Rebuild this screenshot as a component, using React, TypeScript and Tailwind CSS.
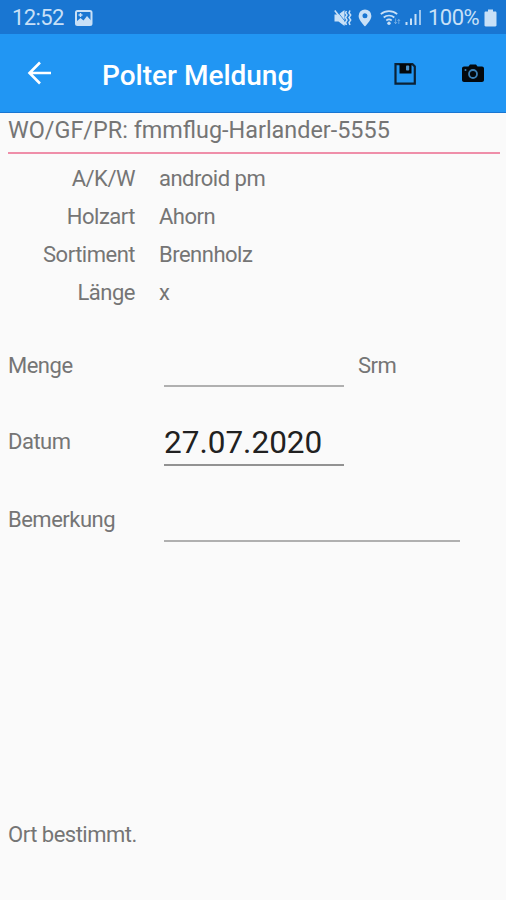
const DETAILS = [
  { label: 'A/K/W', value: 'android pm' },
  { label: 'Holzart', value: 'Ahorn' },
  { label: 'Sortiment', value: 'Brennholz' },
  { label: 'Länge', value: 'x' },
]

function StatusBar() {
  return (
    <div className="h-[34px] bg-[#1976d2] flex items-center text-[#c8e0f7]">
      <span className="ml-[12px] mt-[2px] w-[63px] text-[22px] leading-none tracking-[-0.6px] whitespace-nowrap">12:52</span>
      <svg className="mt-[2px]" width="18" height="16" viewBox="0 0 18 16" fill="none">
        <rect x="1" y="1" width="15.5" height="14" rx="1.5" stroke="currentColor" strokeWidth="2" />
        <path d="M1 12l4.5-4 3 2.5L12 6l4.5 5v4H1z" fill="currentColor" />
        <path d="M5.5 3v4M3.5 5h4" stroke="currentColor" strokeWidth="1.4" />
      </svg>
      <div className="ml-auto mr-[9px] mt-px flex items-center">
        {/* Muted, vibrate */}
        <svg width="18" height="18" viewBox="0 0 18 18" fill="none">
          <path d="M0.5 5.5h4L10.500 1v16L4.500 12.500h-4z" fill="currentColor" />
          <path d="M2.2 1.2l9.800 12.300" stroke="#1976d2" strokeWidth="0.8" />
          <path d="M0.8 1.5l10.700 14" stroke="currentColor" strokeWidth="1.6" />
          <path d="M12.500 2l-1 2 1.500 2-1.500 2.500 1.500 2.500-1.500 2.500 1 2.500M16 1.500l-1 2.300 1.700 2.300L15 8.500l1.700 2.500-1.700 2.500 1 2.500" stroke="currentColor" strokeWidth="1.5" />
        </svg>
        <svg className="ml-[6.5px]" width="14" height="18" viewBox="0 0 14 18">
          <path d="M7 0.5a6.4 6.4 0 0 0-6.4 6.4C.6 11.3 7 17.3 7 17.3s6.4-6 6.4-10.4A6.4 6.4 0 0 0 7 .5zM7 9.3a2.5 2.5 0 1 1 0-5 2.5 2.5 0 0 1 0 5z" fill="currentColor" />
        </svg>
        <svg className="ml-[8px]" width="21" height="17" viewBox="0 0 21 17" fill="none" stroke="currentColor" strokeWidth="1.7">
          <path d="M0.8 5.2a12.5 12.5 0 0 1 16.4 0M3.7 8.5a8 8 0 0 1 10.6 0M6.3 11.5a4.4 4.4 0 0 1 5.4 0" />
          <circle cx="9" cy="14.3" r="1.7" fill="currentColor" stroke="none" />
          <path d="M15.6 9.5v5M14.2 13l1.4 1.7 1.4-1.7M18.8 15v-4.5M17.5 12l1.3-1.6 1.3 1.6" strokeWidth="1" opacity=".45" />
        </svg>
        <svg className="ml-[4px]" width="18" height="17" viewBox="0 0 18 17" fill="currentColor">
          <rect x="0.5" y="13" width="2" height="3" />
          <rect x="5" y="9.5" width="2" height="6.5" />
          <rect x="9.5" y="5" width="2" height="11" />
          <rect x="14" y="1" width="2" height="15" opacity=".75" />
        </svg>
        <span className="ml-[5px] w-[56px] text-[22px] leading-none tracking-[-0.5px]">100%</span>
        <svg width="13" height="18" viewBox="0 0 13 18" fill="currentColor">
          <path d="M4 0.5h5v2h2.3c.7 0 1.2.5 1.2 1.2v12.6c0 .7-.5 1.2-1.2 1.2H1.7c-.7 0-1.2-.5-1.2-1.2V3.7c0-.7.5-1.2 1.2-1.2H4z" />
        </svg>
      </div>
    </div>
  )
}

function AppBar() {
  return (
    <div className="h-[79px] bg-[#2196f3] border-b border-[#1976d2] flex items-center text-white">
      <button className="ml-[27px] mb-px" aria-label="Zurück">
        <svg width="25" height="24" viewBox="0 0 25 24" fill="none" stroke="currentColor" strokeWidth="2.6">
          <path d="M24 12H3M13 1.5L2.5 12 13 22.5" />
        </svg>
      </button>
      <h1 className="ml-[50px] mt-[5px] text-[28px] leading-none font-medium whitespace-nowrap">Polter Meldung</h1>
      <button className="ml-auto mt-[2px]" aria-label="Speichern">
        <svg width="22" height="22" viewBox="0 0 22 22" fill="none">
          <path d="M1.5 1.2h17L20.8 3.5V20.700H1.5z" stroke="#0b2236" strokeWidth="2.2" />
          <path d="M5.5 1h12v9.5h-12z" fill="#03080d" />
          <rect x="12" y="2.5" width="3.2" height="5" rx="0.8" fill="#4a90c8" />
        </svg>
      </button>
      <button className="ml-[46px] mr-[22px] mb-px" aria-label="Foto">
        <svg width="22" height="18" viewBox="0 0 22 18">
          <path d="M6.5 2.5L8 .5h6l1.5 2H20c1.1 0 2 .9 2 2V16c0 1.1-.9 2-2 2H2c-1.1 0-2-.9-2-2V4.5c0-1.1.9-2 2-2z" fill="#03080d" />
          <circle cx="11" cy="10" r="4" fill="none" stroke="#3c80b6" strokeWidth="1.8" />
          <circle cx="3.5" cy="6" r="1" fill="#3c80b6" />
        </svg>
      </button>
    </div>
  )
}

export default function App() {
  return (
    <div className="w-[506px] h-[900px] flex flex-col overflow-hidden bg-[#fafafa] font-['Roboto',sans-serif]">
      <StatusBar />
      <AppBar />

      <div className="ml-2 mr-[6px] h-[41px] pt-1 border-b-2 border-[#ef8ea9] text-[23.4px] leading-[27px] text-[#757575] whitespace-nowrap">
        WO/GF/PR: fmmflug-Harlander-5555
      </div>

      <div className="flex-1 flex flex-col text-[22px] tracking-[-0.5px] text-[#757575]">
        <dl className="pt-[6px]">
          {DETAILS.map((d) => (
            <div key={d.label} className="h-[38px] flex items-center gap-6 leading-none">
              <dt className="w-[135px] text-right">{d.label}</dt>
              <dd>{d.value}</dd>
            </div>
          ))}
        </dl>

        <div className="mt-[33px] ml-2 h-[42px] flex">
          <label className="w-[156px] leading-[42px]">Menge</label>
          <div className="w-[180px] border-b-2 border-[#b0b0b0]" />
          <span className="ml-[14px] leading-[42px]">Srm</span>
        </div>

        <div className="mt-[34px] ml-2 h-[45px] flex">
          <label className="w-[156px] leading-[42px]">Datum</label>
          <div className="w-[180px] border-b-2 border-[#929292] text-[31.5px] tracking-normal leading-[44px] text-[#212121]">
            27.07.2020
          </div>
        </div>

        <div className="mt-[34px] ml-2 h-[42px] flex">
          <label className="w-[156px] leading-[40px]">Bemerkung</label>
          <div className="w-[296px] border-b-2 border-[#b0b0b0]" />
        </div>

        <p className="mt-auto ml-2 mb-[52px] leading-[26px]">Ort bestimmt.</p>
      </div>
    </div>
  )
}
